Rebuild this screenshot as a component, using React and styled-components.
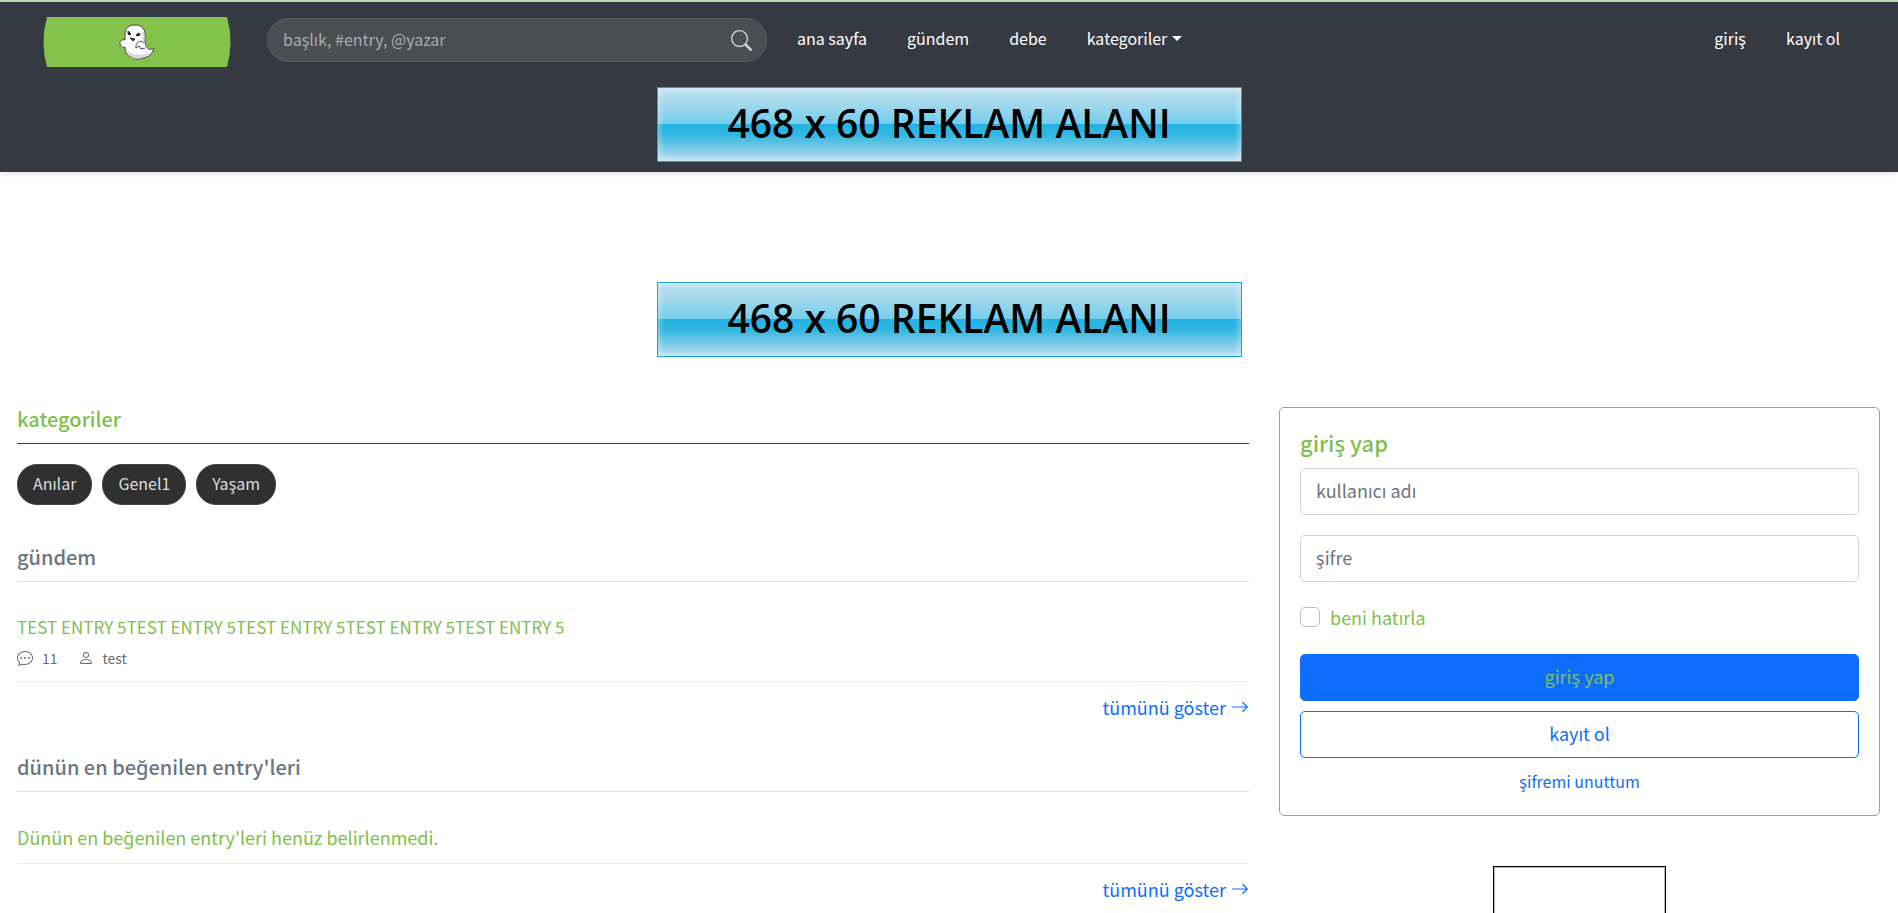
import React from 'react';
import styled, { createGlobalStyle } from 'styled-components';
import { BsSearch, BsChatDots, BsPerson, BsArrowRight } from 'react-icons/bs';

const GREEN = '#7fc04a';
const BLUE = '#0d6efd';
const DARK = '#353941';

const GlobalStyle = createGlobalStyle`
    *, *:before, *:after {
        box-sizing: border-box;
    }

    html {
        scrollbar-width: none;
    }

    body {
        margin: 0;
        background: #fff;
        color: #212529;
        font-family: 'Noto Sans CJK SC', 'Noto Sans', sans-serif;
        font-size: 18px;
        line-height: 30px;
    }

    a {
        text-decoration: none;
    }

    input, button {
        font-family: inherit;
        font-size: inherit;
        line-height: inherit;
    }
`;

const Header = styled.header`
    display: flex;
    flex-direction: column;
    padding-bottom: 10px;
    background: ${DARK};
    border-top: 2px solid #b4dab5;
    box-shadow: 0 2px 5px rgba(0, 0, 0, 0.1);
`;

const Navbar = styled.nav`
    display: flex;
    align-items: flex-start;
    padding: 15px 58px 20px 43px;
`;

const LogoLink = styled.a`
    display: block;
    height: 50px;
    margin-right: 36px;

    svg {
        display: block;
    }
`;

const SearchForm = styled.form`
    display: flex;
    align-items: center;
    width: 500px;
    height: 44px;
    margin: 1px 30px 0 0;
    padding: 0 14px 0 15px;
    background: #4a4e51;
    border: 1px solid #5d6165;
    border-radius: 22px;
`;

const SearchInput = styled.input`
    flex: 1;
    min-width: 0;
    padding: 0 0 2px;
    background: transparent;
    border: 0;
    outline: 0;
    color: #fff;
    font-size: 16px;

    &::placeholder {
        color: #a9abac;
        opacity: 1;
    }
`;

const SearchButton = styled.button`
    display: flex;
    padding: 0;
    background: transparent;
    border: 0;
    color: #d4d5d6;
    font-size: 21px;
    cursor: pointer;
`;

const NavLinks = styled.ul`
    display: flex;
    gap: 40px;
    margin: ${({ $end }) => ($end ? '6px 0 0 auto' : '6px 0 0')};
    padding: 0;
    list-style: none;
`;

const NavLink = styled.a`
    display: flex;
    align-items: center;
    color: #fff;
    font-size: 16px;
`;

const Caret = styled.span`
    margin-left: 5px;
    border-top: 5px solid;
    border-right: 5px solid transparent;
    border-left: 5px solid transparent;
`;

const AdBanner = styled.a`
    display: flex;
    align-items: center;
    justify-content: center;
    width: 585px;
    height: 75px;
    margin: 0 auto;
    padding-bottom: 3px;
    background: linear-gradient(#bfe0ef, #a6d9ec 20%, #74ceee 49%, #22b2e2 50%, #36b8e2 65%, #82cce8 85%, #b4dff0);
    border: 1px solid #1ba4d3;
    box-shadow: inset 0 0 6px 1px rgba(255, 255, 255, 0.5);
    color: #000;
    font-family: 'Open Sans', sans-serif;
    font-size: 39px;
    font-weight: 600;
    white-space: nowrap;
`;

const AdRow = styled.div`
    padding: 110px 0 50px;
`;

const Main = styled.main`
    display: grid;
    grid-template-columns: minmax(0, 41fr) minmax(0, 20fr);
    gap: 30px;
    align-items: start;
    padding: 0 18px 0 17px;
`;

const SectionTitle = styled.h2`
    margin: 0;
    padding-bottom: 12px;
    border-bottom: 1px solid ${({ $accent }) => ($accent ? '#3c3f42' : '#dee2e6')};
    color: ${({ $accent }) => ($accent ? GREEN : '#6c757d')};
    font-size: 20px;
    font-weight: 500;
    line-height: 24px;
`;

const TagList = styled.div`
    display: flex;
    gap: 10px;
    margin: 20px 0 40px;
`;

const Tag = styled.a`
    padding: 4px 15px 6px;
    background: #303030;
    border: 1px solid #444;
    border-radius: 20px;
    color: #ddd;
    font-size: 16px;
    line-height: 29px;
`;

const Entry = styled.article`
    padding: 30px 0 11px;
    border-bottom: 1px solid #ebedef;
    color: ${GREEN};
`;

const EntryLink = styled.a`
    display: block;
    color: ${GREEN};
    font-size: 17px;
`;

const EntryMeta = styled.div`
    display: flex;
    align-items: center;
    gap: 20px;
    margin-top: 4px;
    color: #6b6e71;
    font-size: 14px;
    line-height: 24px;
`;

const MetaItem = styled.span`
    display: flex;
    align-items: center;
    gap: 9px;

    svg {
        font-size: 16px;
    }
`;

const ShowAll = styled.a`
    display: flex;
    align-items: center;
    justify-content: flex-end;
    gap: 5px;
    margin: 10px 0 33px;
    color: ${BLUE};

    svg {
        font-size: 18px;
    }
`;

const LoginCard = styled.form`
    display: flex;
    flex-direction: column;
    padding: 20px;
    border: 1px solid ${GREEN};
    border-radius: 5px;
`;

const CardTitle = styled.h2`
    margin: 0;
    padding-bottom: 12px;
    color: ${GREEN};
    font-size: 22px;
    font-weight: 500;
    line-height: 28px;
`;

const Field = styled.input`
    width: 100%;
    height: 47px;
    margin-bottom: 20px;
    padding: 6px 15px 9px;
    border: 1px solid #ced4da;
    border-radius: 5px;

    &::placeholder {
        color: #6c757d;
        opacity: 1;
    }
`;

const Remember = styled.label`
    display: flex;
    align-items: center;
    gap: 10px;
    margin-bottom: 22px;
    color: ${GREEN};
`;

const Checkbox = styled.input`
    appearance: none;
    width: 20px;
    height: 20px;
    margin: 0;
    background: #fff;
    border: 1px solid #bfbfbf;
    border-radius: 5px;

    &:checked {
        background: ${BLUE};
    }
`;

const Button = styled.button`
    height: 47px;
    margin-bottom: 10px;
    padding: 6px 15px 9px;
    background: ${({ $outline }) => ($outline ? '#fff' : BLUE)};
    border: 1px solid ${BLUE};
    border-radius: 5px;
    color: ${({ $outline }) => ($outline ? BLUE : GREEN)};
    cursor: pointer;
`;

const ForgotLink = styled.a`
    align-self: center;
    color: ${BLUE};
    font-size: 16px;
    line-height: 27px;
`;

const SideAd = styled.div`
    width: 173px;
    height: 600px;
    margin: 50px auto 0;
    border: 1px solid #000;
    box-shadow: inset 0 0 0 1px #b5b5b5;
`;

const Logo = () => (
    <svg width="188" height="50" viewBox="0 0 188 50" aria-hidden="true">
        <path d="M4 0H184Q191 25 184 50H4Q-3 25 4 0Z" fill="#83c34b" />
        <path
            d="M77 27C76 24 79 22 82 23V17C82 11 86 8 92 8C99 8 102 12 102 18V25C103 32 107 34 111 31C109 37 106 40 100 41C97 42 93 43 91 41C85 40 82 36 82 30C80 31 78 30 77 27Z"
            fill="#fdfcff"
            stroke="#5a4052"
        />
        <path d="M84 34C88 38 97 39 107 36C103 40 99 40 94 41C89 42 86 39 84 34Z" fill="#d9d3e2" />
        <path d="M100 15C101 20 101 22 100 24" fill="none" stroke="#ded8e6" strokeWidth="2" />
        <path d="M93 31C92 26 97 22 101 26M93 31L96 29L98 32L102 31" fill="none" stroke="#5a4052" />
        <path d="M85 14L88 17L87 18L85 17ZM93 18L96 16L97 18L94 19Z" fill="#33202e" stroke="#33202e" />
        <path d="M87 21L92 22L90 24Z" fill="#702943" stroke="#33202e" />
    </svg>
);

const ENTRY_TITLE = 'TEST ENTRY 5TEST ENTRY 5TEST ENTRY 5TEST ENTRY 5TEST ENTRY 5';
const CATEGORIES = ['Anılar', 'Genel1', 'Yaşam'];

const Ad = () => <AdBanner href="#">468 x 60 REKLAM ALANI</AdBanner>;

const App = () => (
    <>
        <GlobalStyle />
        <Header>
            <Navbar>
                <LogoLink href="#" aria-label="ana sayfa"><Logo /></LogoLink>
                <SearchForm role="search">
                    <SearchInput type="text" aria-label="ara" placeholder="başlık, #entry, @yazar" />
                    <SearchButton type="button" aria-label="ara"><BsSearch /></SearchButton>
                </SearchForm>
                <NavLinks>
                    <li><NavLink href="#">ana sayfa</NavLink></li>
                    <li><NavLink href="#">gündem</NavLink></li>
                    <li><NavLink href="#">debe</NavLink></li>
                    <li><NavLink href="#">kategoriler<Caret /></NavLink></li>
                </NavLinks>
                <NavLinks $end>
                    <li><NavLink href="#">giriş</NavLink></li>
                    <li><NavLink href="#">kayıt ol</NavLink></li>
                </NavLinks>
            </Navbar>
            <Ad />
        </Header>
        <AdRow><Ad /></AdRow>
        <Main>
            <div>
                <SectionTitle $accent>kategoriler</SectionTitle>
                <TagList>
                    {CATEGORIES.map(name => <Tag key={name} href="#">{name}</Tag>)}
                </TagList>

                <SectionTitle>gündem</SectionTitle>
                <Entry>
                    <EntryLink href="#">{ENTRY_TITLE}</EntryLink>
                    <EntryMeta>
                        <MetaItem><BsChatDots />11</MetaItem>
                        <MetaItem><BsPerson />test</MetaItem>
                    </EntryMeta>
                </Entry>
                <ShowAll href="#">tümünü göster<BsArrowRight /></ShowAll>

                <SectionTitle>dünün en beğenilen entry'leri</SectionTitle>
                <Entry>Dünün en beğenilen entry'leri henüz belirlenmedi.</Entry>
                <ShowAll href="#">tümünü göster<BsArrowRight /></ShowAll>
            </div>
            <aside>
                <LoginCard>
                    <CardTitle>giriş yap</CardTitle>
                    <Field type="text" aria-label="kullanıcı adı" placeholder="kullanıcı adı" />
                    <Field type="password" aria-label="şifre" placeholder="şifre" />
                    <Remember>
                        <Checkbox type="checkbox" />
                        beni hatırla
                    </Remember>
                    <Button type="button">giriş yap</Button>
                    <Button type="button" $outline>kayıt ol</Button>
                    <ForgotLink href="#">şifremi unuttum</ForgotLink>
                </LoginCard>
                <SideAd />
            </aside>
        </Main>
    </>
);

export default App;
